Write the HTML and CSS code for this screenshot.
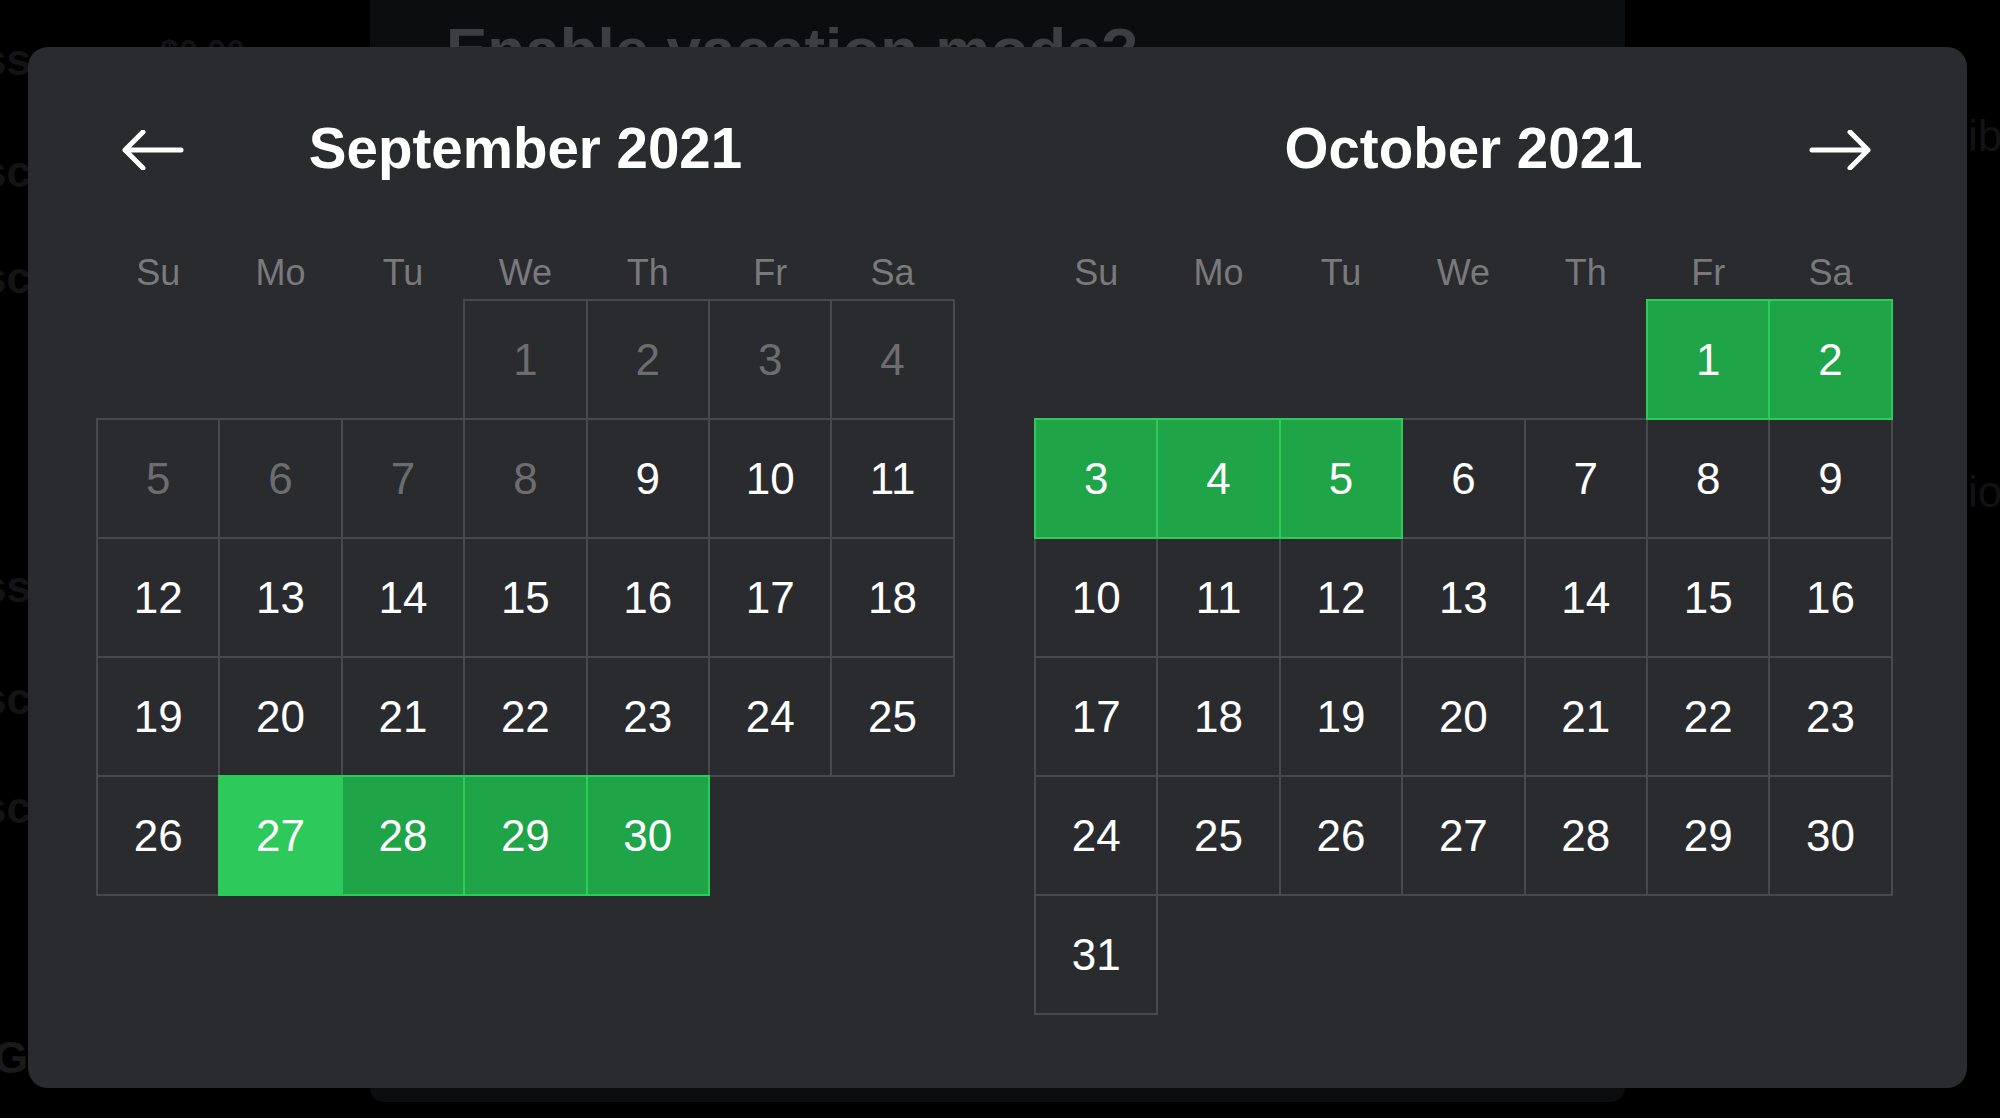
FILE: index.html
```html
<!DOCTYPE html>
<html lang="en">
<head>
<meta charset="utf-8">
<title>Date range picker</title>
<link rel="stylesheet" href="styles.css">
</head>
<body>
<div class="page">
  <div class="ghost g1">ss</div>
  <div class="ghost g2">sc</div>
  <div class="ghost g3">sc</div>
  <div class="ghost g4">ss</div>
  <div class="ghost g5">sc</div>
  <div class="ghost g6">sc</div>
  <div class="ghost g7">G</div>
  <div class="ghost g8">ib</div>
  <div class="ghost g9">io</div>
  <div class="ghost g10">$0.00</div>
  <div class="back-modal">
    <div class="back-title">Enable vacation mode?</div>
  </div>

  <div class="picker">
    <section class="month">
      <header class="month-head">
        <button class="nav nav-prev" aria-label="Previous month">
          <svg viewBox="0 0 64 40" width="64" height="40"><path d="M4 20 H60 M22 2 L4 20 L22 38" fill="none" stroke="#fff" stroke-width="5" stroke-linecap="round" stroke-linejoin="round"/></svg>
        </button>
        <h2 class="month-title">September 2021</h2>
      </header>
      <div class="weekdays"><span>Su</span><span>Mo</span><span>Tu</span><span>We</span><span>Th</span><span>Fr</span><span>Sa</span></div>
      <div class="days">
        <span class="empty"></span><span class="empty"></span><span class="empty"></span>
        <span class="day off">1</span><span class="day off">2</span><span class="day off">3</span><span class="day off">4</span>
        <span class="day off">5</span><span class="day off">6</span><span class="day off">7</span><span class="day off">8</span><span class="day">9</span><span class="day">10</span><span class="day">11</span>
        <span class="day">12</span><span class="day">13</span><span class="day">14</span><span class="day">15</span><span class="day">16</span><span class="day">17</span><span class="day">18</span>
        <span class="day">19</span><span class="day">20</span><span class="day">21</span><span class="day">22</span><span class="day">23</span><span class="day">24</span><span class="day">25</span>
        <span class="day">26</span><span class="day start">27</span><span class="day sel">28</span><span class="day sel">29</span><span class="day sel">30</span>
      </div>
    </section>

    <section class="month">
      <header class="month-head">
        <h2 class="month-title">October 2021</h2>
        <button class="nav nav-next" aria-label="Next month">
          <svg viewBox="0 0 64 40" width="64" height="40"><path d="M4 20 H60 M42 2 L60 20 L42 38" fill="none" stroke="#fff" stroke-width="5" stroke-linecap="round" stroke-linejoin="round"/></svg>
        </button>
      </header>
      <div class="weekdays"><span>Su</span><span>Mo</span><span>Tu</span><span>We</span><span>Th</span><span>Fr</span><span>Sa</span></div>
      <div class="days">
        <span class="empty"></span><span class="empty"></span><span class="empty"></span><span class="empty"></span><span class="empty"></span>
        <span class="day sel">1</span><span class="day sel">2</span>
        <span class="day sel">3</span><span class="day sel">4</span><span class="day sel">5</span><span class="day">6</span><span class="day">7</span><span class="day">8</span><span class="day">9</span>
        <span class="day">10</span><span class="day">11</span><span class="day">12</span><span class="day">13</span><span class="day">14</span><span class="day">15</span><span class="day">16</span>
        <span class="day">17</span><span class="day">18</span><span class="day">19</span><span class="day">20</span><span class="day">21</span><span class="day">22</span><span class="day">23</span>
        <span class="day">24</span><span class="day">25</span><span class="day">26</span><span class="day">27</span><span class="day">28</span><span class="day">29</span><span class="day">30</span>
        <span class="day">31</span>
      </div>
    </section>
  </div>
</div>
</body>
</html>
```
FILE: styles.css
```css
html, body {
  margin: 0;
  padding: 0;
  background: #000;
  width: 2000px;
  height: 1118px;
  overflow: hidden;
  font-family: "Liberation Sans", Arial, sans-serif;
}

.page {
  position: relative;
  width: 2000px;
  height: 1118px;
}

.ghost {
  position: absolute;
  font-weight: 700;
  font-size: 44px;
  line-height: 1;
  color: #141416;
}
.g1 { left: -18px; top: 38px; }
.g2 { left: -18px; top: 150px; }
.g3 { left: -18px; top: 256px; }
.g4 { left: -18px; top: 565px; }
.g5 { left: -18px; top: 677px; }
.g6 { left: -18px; top: 786px; }
.g7 { left: -6px; top: 1036px; color: #1a1a1c; }
.g8 { left: 1968px; top: 114px; font-weight: 400; color: #121214; }
.g9 { left: 1968px; top: 470px; font-weight: 400; color: #121214; }
.g10 { left: 160px; top: 34px; font-size: 34px; color: #131315; }

.back-modal {
  position: absolute;
  left: 370px;
  top: -20px;
  width: 1255px;
  height: 1122px;
  background: #0c0d0f;
  border-radius: 14px;
}

.back-title {
  position: absolute;
  left: 76px;
  top: 39px;
  font-size: 62px;
  line-height: 1;
  font-weight: 700;
  color: #3d3e41;
}

.picker {
  position: absolute;
  left: 28px;
  top: 47px;
  width: 1939px;
  height: 1041px;
  box-sizing: border-box;
  background: #2a2b2f;
  border-radius: 20px;
  padding: 74px 0 0 69px;
  display: flex;
  gap: 81px;
}

.month {
  width: 857px;
  display: flex;
  flex-direction: column;
}

.month-head {
  position: relative;
  height: 56px;
  display: flex;
  justify-content: center;
  align-items: center;
}

.month-title {
  margin: 0;
  font-size: 56.5px;
  line-height: 56px;
  font-weight: 700;
  color: #fff;
}

.nav {
  position: absolute;
  top: 50%;
  margin-top: -19px;
  padding: 0;
  border: 0;
  background: none;
  width: 64px;
  height: 40px;
  display: block;
}
.nav svg { display: block; }
.nav-prev { left: 24px; }
.nav-next { right: 20px; }

.weekdays {
  margin-top: 78px;
  display: grid;
  grid-template-columns: repeat(7, 122.4px);
  height: 36px;
  font-size: 36px;
  line-height: 36px;
  color: #7a7a7d;
  text-align: center;
}

.days {
  margin-top: 9px;
  display: grid;
  grid-template-columns: repeat(7, 122.4px);
  grid-auto-rows: 119px;
}

.day {
  display: flex;
  align-items: center;
  justify-content: center;
  font-size: 44px;
  color: #fff;
  box-shadow: inset 0 0 0 1px #48494f, 0 0 0 1px #48494f;
}

.day.off { color: #6d6d70; }

.day.sel {
  position: relative;
  z-index: 1;
  background: #1fa447;
  box-shadow: inset 0 0 0 1px #2ccb5a, 0 0 0 1px #2ccb5a;
}

.day.start {
  position: relative;
  z-index: 2;
  background: #2dca5b;
  box-shadow: inset 0 0 0 1px #2dca5b, 0 0 0 1px #2dca5b;
}
```
